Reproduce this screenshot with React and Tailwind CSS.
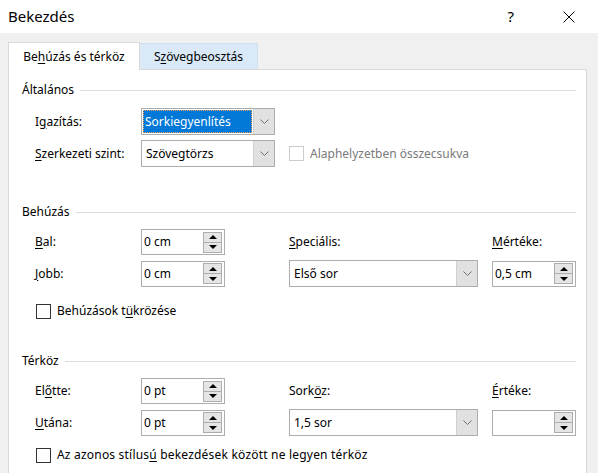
import React from 'react';

const Chevron = () => (
  <svg width="9" height="5" viewBox="0 0 9 5" className="text-[#707070]">
    <path d="M0.5 0.5 L4.5 4.5 L8.5 0.5" fill="none" stroke="currentColor" strokeWidth="1" />
  </svg>
);

const Arrow = ({ up }) => (
  <svg width="8" height="4" viewBox="0 0 8 4">
    <polygon points={up ? '0,4 8,4 4,0' : '0,0 8,0 4,4'} fill="#000" />
  </svg>
);

function Select({ value, width, selected }) {
  return (
    <div className={`flex h-[27px] border border-[#adadad] bg-white ${width}`}>
      <div className="flex flex-1 items-center p-[1px]">
        {selected ? (
          <div className="flex h-full w-full items-center bg-[#0078d7] pl-[2px] text-white outline-1 outline-dotted outline-[#f5a35a] -outline-offset-1">
            {value}
          </div>
        ) : (
          <span className="pl-[3px]">{value}</span>
        )}
      </div>
      <div className="flex w-[21px] items-center justify-center border-l border-[#d0d0d0] bg-[#e1e1e1]">
        <Chevron />
      </div>
    </div>
  );
}

function Spin({ value }) {
  return (
    <div className="flex h-[26px] w-[84px] items-center border border-[#adadad] bg-white pl-[2px] pr-[2px]">
      <span className="flex-1">{value}</span>
      <div className="flex flex-col">
        <div className="flex h-[11px] w-[19px] items-center justify-center border border-[#adadad] bg-[#e5e5e5]">
          <Arrow up />
        </div>
        <div className="-mt-px flex h-[11px] w-[19px] items-center justify-center border border-[#adadad] bg-[#e5e5e5]">
          <Arrow />
        </div>
      </div>
    </div>
  );
}

function Check({ children, disabled, wide }) {
  return (
    <div className="flex items-center gap-[6px]">
      <div className={`h-[15px] w-[15px] border bg-white ${disabled ? 'border-[#cccccc]' : 'border-[#333333]'}`} />
      <span className={`${disabled ? 'text-[#7a7a7a]' : ''} ${wide ? 'tracking-[0.2px]' : ''}`}>{children}</span>
    </div>
  );
}

function Header({ children }) {
  return (
    <div className="flex h-[16px] items-center gap-[6px] pl-[13px] pr-[10px]">
      <span>{children}</span>
      <div className="h-px flex-1 bg-[#dcdcdc]" />
    </div>
  );
}

const U = ({ children }) => <u className="underline-offset-2">{children}</u>;

export default function App() {
  return (
    <div
      className="h-[473px] w-[598px] overflow-hidden bg-[#f0f0f0] text-[12px] text-black"
      style={{ fontFamily: '"Noto Sans", "Open Sans", sans-serif' }}
    >
      {/* title bar */}
      <div className="flex h-[33px] items-center bg-white pl-[8px]">
        <span className="flex-1 text-[15px]">Bekezdés</span>
        <span className="mr-[49px] text-[15px]">?</span>
        <svg width="12" height="12" viewBox="0 0 12 12" className="mr-[23px]">
          <path d="M0.5 0.5 L11.5 11.5 M11.5 0.5 L0.5 11.5" stroke="#000" strokeWidth="1" />
        </svg>
      </div>

      {/* tabs */}
      <div className="flex items-end pl-[8px] pt-[9px]">
        <div className="relative z-10 -mb-px flex h-[28px] w-[132px] items-center justify-center border border-b-0 border-[#d9d9d9] bg-white">
          Be<U>h</U>úzás és térköz
        </div>
        <div className="flex h-[26px] w-[118px] items-center justify-center border border-b-0 border-l-0 border-[#cde0f2] bg-[#d9e9f8]">
          S<U>z</U>övegbeosztás
        </div>
      </div>

      {/* panel */}
      <div className="ml-[8px] h-[420px] w-[579px] border border-[#d9d9d9] bg-white">
        <div className="mt-[12px]">
          <Header>Általános</Header>
        </div>

        <div className="mt-[10px] flex items-center pl-[26px]">
          <span className="w-[106px]">I<U>g</U>azítás:</span>
          <Select value="Sorkiegyenlítés" width="w-[134px]" selected />
        </div>
        <div className="mt-[5px] flex items-center pl-[26px]">
          <span className="w-[106px]"><U>S</U>zerkezeti szint:</span>
          <Select value="Szövegtörzs" width="w-[134px]" />
          <div className="ml-[14px]">
            <Check disabled>Alaphelyzetben összecsukva</Check>
          </div>
        </div>

        <div className="mt-[37px]">
          <Header>Behúzás</Header>
        </div>

        <div className="mt-[9px] grid grid-cols-[106px_84px_64px_189px_14px_84px] items-center gap-y-[5px] pl-[26px]">
          <span><U>B</U>al:</span>
          <Spin value="0 cm" />
          <span />
          <span><U>S</U>peciális:</span>
          <span />
          <span><U>M</U>értéke:</span>

          <span><U>J</U>obb:</span>
          <Spin value="0 cm" />
          <span />
          <Select value="Első sor" width="w-[189px]" />
          <span />
          <Spin value="0,5 cm" />
        </div>

        <div className="mt-[15px] pl-[27px]">
          <Check>Behúzások t<U>ü</U>krözése</Check>
        </div>

        <div className="mt-[33px]">
          <Header>Térköz</Header>
        </div>

        <div className="mt-[9px] grid grid-cols-[106px_84px_64px_189px_14px_84px] items-center gap-y-[5px] pl-[26px]">
          <span>El<U>ő</U>tte:</span>
          <Spin value="0 pt" />
          <span />
          <span>Sork<U>ö</U>z:</span>
          <span />
          <span><U>É</U>rtéke:</span>

          <span><U>U</U>tána:</span>
          <Spin value="0 pt" />
          <span />
          <Select value="1,5 sor" width="w-[189px]" />
          <span />
          <Spin value="" />
        </div>

        <div className="mt-[10px] pl-[27px]">
          <Check wide>Az azonos stílus<U>ú</U> bekezdések között ne legyen térköz</Check>
        </div>
      </div>
    </div>
  );
}
